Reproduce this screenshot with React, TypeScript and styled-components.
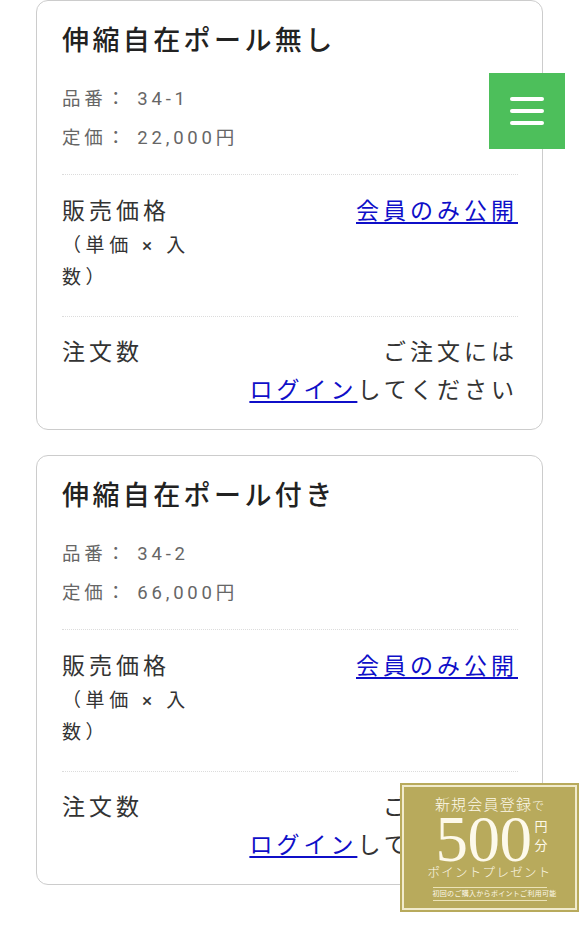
import React from "react";
import styled, { createGlobalStyle } from "styled-components";

const GlobalStyle = createGlobalStyle`
    html, body {
        margin: 0;
        padding: 0;
        background: #fff;
    }

    body {
        font-family: "Roboto", "Noto Sans CJK JP", sans-serif;
        color: #333;
    }
`;

const Page = styled.div`
    padding: 0 37px 40px 36px;
`;

const Card = styled.section`
    border: 1px solid #cccccc;
    border-radius: 12px;
    padding: 23px 24px 0 25px;
    margin-bottom: 25px;
`;

const Title = styled.h2`
    margin: 0;
    font-size: 27px;
    line-height: 34px;
    font-weight: 500;
    letter-spacing: 3.4px;
    color: #222;
`;

const Meta = styled.div`
    margin-top: 22px;
    padding-bottom: 16px;
`;

const MetaLine = styled.p`
    margin: 0;
    font-size: 18.5px;
    line-height: 39px;
    letter-spacing: 3.8px;
    color: #666;
`;

const Row = styled.div<{ $top: number; $bottom: number }>`
    display: flex;
    align-items: flex-start;
    border-top: 1px dotted #dcdcdc;
    padding: ${({ $top, $bottom }) => `${$top - 1}px 0 ${$bottom}px`};
`;

const Label = styled.div<{ $lineHeight: number }>`
    width: 138px;
    flex-shrink: 0;
    font-size: 23px;
    line-height: ${({ $lineHeight }) => $lineHeight}px;
    letter-spacing: 4px;
    color: #333;
`;

const LabelNote = styled.div`
    margin-top: 2px;
    font-size: 19px;
    line-height: 32px;
    letter-spacing: 4.6px;
    color: #333;
`;

const Value = styled.div<{ $lineHeight: number }>`
    flex: 1;
    text-align: right;
    font-size: 23px;
    line-height: ${({ $lineHeight }) => $lineHeight}px;
    letter-spacing: 4px;
    color: #333;
`;

const TextLink = styled.a`
    color: #0f0fc8;
    text-decoration: underline;
    text-decoration-thickness: 2px;
    text-underline-offset: 3px;
    cursor: pointer;
`;

const MenuButton = styled.button`
    position: fixed;
    top: 73px;
    right: 15px;
    width: 76px;
    height: 76px;
    border: none;
    background: #4dbf5b;
    display: flex;
    flex-direction: column;
    align-items: center;
    justify-content: center;
    gap: 8px;
    padding: 0;
    cursor: pointer;
`;

const MenuBar = styled.span`
    display: block;
    width: 34px;
    height: 4px;
    border-radius: 2px;
    background: #fff;
`;

const Banner = styled.a`
    position: fixed;
    right: 1px;
    bottom: 23px;
    width: 179px;
    height: 129px;
    box-sizing: border-box;
    padding: 2px;
    background: #b8aa5c;
    text-decoration: none;
    cursor: pointer;
`;

const BannerInner = styled.div`
    height: 100%;
    box-sizing: border-box;
    border: 2px solid #f1ebcd;
    display: flex;
    flex-direction: column;
    align-items: center;
    color: #fdf9ea;
    font-family: "Liberation Serif", "Noto Sans CJK JP", serif;
`;

const BannerLead = styled.div`
    margin-top: 9px;
    font-size: 15px;
    line-height: 18px;
    letter-spacing: 1.2px;
    font-weight: 300;

    small {
        font-size: 12px;
        letter-spacing: 0;
    }
`;

const Amount = styled.div`
    display: flex;
    align-items: center;
    height: 48px;
    margin-left: 4px;
`;

const AmountNumber = styled.span`
    font-family: "Liberation Serif", serif;
    font-size: 65px;
    line-height: 48px;
    letter-spacing: -0.5px;
`;

const AmountUnit = styled.span`
    display: flex;
    flex-direction: column;
    margin-left: 3px;
    margin-top: -6px;
    font-size: 13px;
    line-height: 19px;
`;

const BannerSub = styled.div`
    margin-top: 1px;
    font-size: 12.5px;
    line-height: 18px;
    letter-spacing: 1.3px;
    font-weight: 300;
`;

const BannerNote = styled.div`
    margin-top: 5px;
    width: 114px;
    border-top: 1px solid #ebe3b8;
    border-bottom: 1px solid #ebe3b8;
    text-align: center;
    font-size: 7px;
    line-height: 12px;
    letter-spacing: 0.3px;
    white-space: nowrap;
`;

type Product = {
    name: string;
    code: string;
    price: string;
};

const products: Product[] = [
    { name: "伸縮自在ポール無し", code: "34-1", price: "22,000円" },
    { name: "伸縮自在ポール付き", code: "34-2", price: "66,000円" },
];

const ProductCard: React.FC<{ product: Product }> = ({ product }) => (
    <Card>
        <Title>{product.name}</Title>
        <Meta>
            <MetaLine>品番： {product.code}</MetaLine>
            <MetaLine>定価： {product.price}</MetaLine>
        </Meta>
        <Row $top={22} $bottom={22}>
            <Label $lineHeight={32}>
                販売価格
                <LabelNote>（単価 × 入数）</LabelNote>
            </Label>
            <Value $lineHeight={32}>
                <TextLink>会員のみ公開</TextLink>
            </Value>
        </Row>
        <Row $top={18} $bottom={19}>
            <Label $lineHeight={38}>注文数</Label>
            <Value $lineHeight={38}>
                ご注文には
                <br />
                <TextLink>ログイン</TextLink>してください
            </Value>
        </Row>
    </Card>
);

const App: React.FC = () => {
    return (
        <>
            <GlobalStyle />
            <Page>
                {products.map((p) => (
                    <ProductCard key={p.code} product={p} />
                ))}
            </Page>
            <MenuButton aria-label="メニュー">
                <MenuBar />
                <MenuBar />
                <MenuBar />
            </MenuButton>
            <Banner>
                <BannerInner>
                    <BannerLead>
                        新規会員登録<small>で</small>
                    </BannerLead>
                    <Amount>
                        <AmountNumber>500</AmountNumber>
                        <AmountUnit>
                            <span>円</span>
                            <span>分</span>
                        </AmountUnit>
                    </Amount>
                    <BannerSub>ポイントプレゼント</BannerSub>
                    <BannerNote>初回のご購入からポイントご利用可能</BannerNote>
                </BannerInner>
            </Banner>
        </>
    );
};

export default App;
